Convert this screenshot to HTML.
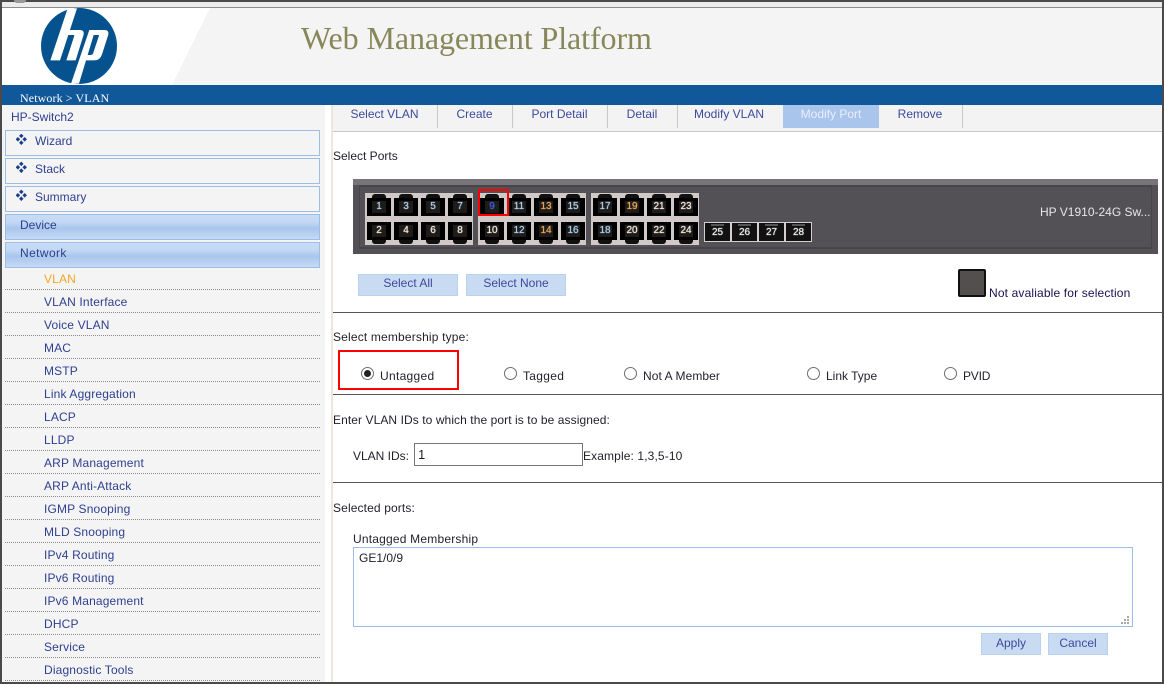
<!DOCTYPE html>
<html><head><meta charset="utf-8"><title>Web Management Platform</title>
<style>
html,body{margin:0;padding:0;background:#fff}
#r{position:relative;width:1164px;height:684px;overflow:hidden;background:#fff;font:12px/14px "Liberation Sans",sans-serif;color:#1f1f2a}
#r div,#r span.t{position:absolute}
.t{white-space:nowrap}
.m{left:44px;color:#2e3f8f;letter-spacing:.15px;white-space:nowrap;margin-top:-1px}
.d{left:5px;width:315px;height:0;border-top:1px dotted #8a8a8a}
.b{left:5px;width:313px;height:24px;border:1px solid #9bbde6;background:#f4f4f4}
.bt{color:#2e3f8f;white-space:nowrap;margin-top:-1px}
.g{left:5px;width:313px;height:24px;border:1px solid #9bbde6;background:linear-gradient(#c8dcf6,#c3d8f4 30%,#a9c6ec 55%,#c6daf5)}
.tb{top:107px;color:#3b4a9c;white-space:nowrap;transform:translateX(-50%)}
.sp{top:105px;width:1px;height:23px;background:#c8c8c8}
.hr{left:333px;width:829px;height:1px;background:#555}
.btn{background:#c9daf3;border:1px solid #b9d0ef;box-sizing:border-box;color:#3b4a9c;text-align:center;height:22px;line-height:18px}
.p{width:24px;height:18px;background:#000 linear-gradient(#1e1b19,#1e1b19) center/14px 12px no-repeat;color:#a9d0f2;font:10px/18px "Liberation Sans",sans-serif;text-align:center;text-shadow:0 0 1px currentColor}
.p:before{content:"";position:absolute;left:5px;top:-4px;width:14px;height:4px;background:#111;border-radius:3px 3px 0 0}
.q:before{top:18px;border-radius:0 0 3px 3px}
.x{width:25px;height:18px;background:#111;border:1px solid #d3cfcf;color:#f0f0f0;font:10px/19px "Liberation Sans",sans-serif;text-align:center;text-shadow:0 0 1px currentColor}
.x:before{content:"";position:absolute;left:6px;top:1px;width:13px;height:2px;background:#555}
.w{color:#f3ece0}.o{color:#eba65a}
.grp{background:#d0c9c7;top:193px;height:52px;width:108px}
.rad{top:367px;width:11px;height:11px;border:1px solid #6e6e6e;border-radius:50%;background:#fff}
</style></head><body><div id="r">
<div style="left:0;top:0;width:1164px;height:2px;background:#4a4a4a"></div>
<div style="left:0;top:2px;width:1164px;height:5px;background:#ececec"></div>
<div style="left:14px;top:0;width:12px;height:3px;background:#999;border-radius:0 0 6px 6px"></div>
<div style="left:0;top:7px;width:1164px;height:1px;background:#8c8c8c"></div>
<svg style="position:absolute;left:0;top:8px" width="1164" height="77"><rect width="1164" height="77" fill="#fff"/><polygon points="210,0 1164,0 1164,77 172,77" fill="#f4f4f4"/></svg>
<svg style="position:absolute;left:35px;top:5px" width="90" height="84" viewBox="0 0 270 252">
<circle cx="132" cy="123" r="114" fill="#05528f"/>
<path fill="#fff" d="M98 10 L126 10 L75 166 L46 166 Z"/>
<path fill="#fff" d="M92 75 H134 Q150 75 145 92 L122 166 H94 L118 92 Q119 90 114 90 H86 Z"/>
<path fill="#fff" d="M163 75 H208 Q224 75 219 92 L201 148 Q195 166 178 166 H145 L151 150 H168 Q172 150 174 146 L192 92 Q193 90 189 90 H176 L132 236 H108 Z"/>
</svg>
<div class="t" style="left:301px;top:20px;font:32px/36px 'Liberation Serif',serif;color:#87875a;white-space:nowrap;letter-spacing:-.09px">Web Management Platform</div>
<div style="left:0;top:85px;width:1164px;height:20px;background:#11589a"></div>
<div class="t" style="left:20px;top:91px;font:12px/14px 'Liberation Serif',serif;color:#fff;white-space:nowrap;letter-spacing:.1px">Network &gt; VLAN</div>

<div style="left:2px;top:105px;width:323px;height:579px;background:#f4f4f4"></div>
<div style="left:331px;top:105px;width:2px;height:579px;background:#ebe8d9"></div>
<div style="left:333px;top:105px;width:829px;height:26px;background:#f3f3f3"></div>
<div style="left:333px;top:131px;width:829px;height:1px;background:#c8c8c8"></div>
<div class="bt" style="left:11px;top:110px;margin-top:0">HP-Switch2</div>

<div class="b" style="top:130px"></div><div class="b" style="top:158px"></div><div class="b" style="top:186px"></div>
<svg style="position:absolute;left:16px;top:134px" width="11" height="68" fill="#1c3f8c">
<g><rect x="3.7" y=".3" width="3.2" height="3.2" transform="rotate(45 5.3 1.9)"/><rect x=".3" y="3.7" width="3.2" height="3.2" transform="rotate(45 1.9 5.3)"/><rect x="7.1" y="3.7" width="3.2" height="3.2" transform="rotate(45 8.7 5.3)"/><rect x="3.7" y="7.1" width="3.2" height="3.2" transform="rotate(45 5.3 8.7)"/></g>
<g transform="translate(0,28)"><rect x="3.7" y=".3" width="3.2" height="3.2" transform="rotate(45 5.3 1.9)"/><rect x=".3" y="3.7" width="3.2" height="3.2" transform="rotate(45 1.9 5.3)"/><rect x="7.1" y="3.7" width="3.2" height="3.2" transform="rotate(45 8.7 5.3)"/><rect x="3.7" y="7.1" width="3.2" height="3.2" transform="rotate(45 5.3 8.7)"/></g>
<g transform="translate(0,56)"><rect x="3.7" y=".3" width="3.2" height="3.2" transform="rotate(45 5.3 1.9)"/><rect x=".3" y="3.7" width="3.2" height="3.2" transform="rotate(45 1.9 5.3)"/><rect x="7.1" y="3.7" width="3.2" height="3.2" transform="rotate(45 8.7 5.3)"/><rect x="3.7" y="7.1" width="3.2" height="3.2" transform="rotate(45 5.3 8.7)"/></g>
</svg>
<div class="bt" style="left:35px;top:135px">Wizard</div>
<div class="bt" style="left:35px;top:163px">Stack</div>
<div class="bt" style="left:35px;top:191px">Summary</div>
<div class="g" style="top:214px"></div><div class="g" style="top:242px"></div>
<div class="bt" style="left:20px;top:219px">Device</div>
<div class="bt" style="left:20px;top:247px;letter-spacing:.4px">Network</div>

<div class="m" style="top:273px;color:#f5a623">VLAN</div><div class="d" style="top:289px"></div>
<div class="m" style="top:296px">VLAN Interface</div><div class="d" style="top:312px"></div>
<div class="m" style="top:319px">Voice VLAN</div><div class="d" style="top:335px"></div>
<div class="m" style="top:342px">MAC</div><div class="d" style="top:358px"></div>
<div class="m" style="top:365px">MSTP</div><div class="d" style="top:381px"></div>
<div class="m" style="top:388px">Link Aggregation</div><div class="d" style="top:404px"></div>
<div class="m" style="top:411px">LACP</div><div class="d" style="top:427px"></div>
<div class="m" style="top:434px">LLDP</div><div class="d" style="top:450px"></div>
<div class="m" style="top:457px">ARP Management</div><div class="d" style="top:473px"></div>
<div class="m" style="top:480px">ARP Anti-Attack</div><div class="d" style="top:496px"></div>
<div class="m" style="top:503px">IGMP Snooping</div><div class="d" style="top:519px"></div>
<div class="m" style="top:526px">MLD Snooping</div><div class="d" style="top:542px"></div>
<div class="m" style="top:549px">IPv4 Routing</div><div class="d" style="top:565px"></div>
<div class="m" style="top:572px">IPv6 Routing</div><div class="d" style="top:588px"></div>
<div class="m" style="top:595px">IPv6 Management</div><div class="d" style="top:611px"></div>
<div class="m" style="top:618px">DHCP</div><div class="d" style="top:634px"></div>
<div class="m" style="top:641px">Service</div><div class="d" style="top:657px"></div>
<div class="m" style="top:664px">Diagnostic Tools</div><div class="d" style="top:680px"></div>

<div style="left:783px;top:105px;width:96px;height:23px;background:#a9c5ec"></div>
<div class="tb" style="left:384.5px">Select VLAN</div><div class="sp" style="left:437px"></div>
<div class="tb" style="left:474.5px">Create</div><div class="sp" style="left:512px"></div>
<div class="tb" style="left:559.5px">Port Detail</div><div class="sp" style="left:607px"></div>
<div class="tb" style="left:642px">Detail</div><div class="sp" style="left:677px"></div>
<div class="tb" style="left:729px">Modify VLAN</div>
<div class="tb" style="left:831px;color:#e8eefa">Modify Port</div>
<div class="tb" style="left:920px">Remove</div><div class="sp" style="left:962px"></div>

<div class="t" style="left:333px;top:149px">Select Ports</div>

<div style="left:353px;top:179px;width:805px;height:75px;background:#545156"></div>
<div style="left:353px;top:179px;width:805px;height:6px;background:#77757a"></div>
<div style="left:359px;top:185px;width:793px;height:64px;border:1px solid #47454a;border-width:2px 1px 2px 1px;box-sizing:border-box"></div>
<div class="grp" style="left:365px"></div><div class="grp" style="left:478px"></div><div class="grp" style="left:591px"></div>

<div class="p" style="left:367px;top:198px">1</div><div class="p" style="left:394px;top:198px">3</div><div class="p" style="left:421px;top:198px">5</div><div class="p" style="left:448px;top:198px">7</div>
<div class="p" style="left:480px;top:198px;color:#3f5ce8">9</div><div class="p" style="left:507px;top:198px">11</div><div class="p o" style="left:534px;top:198px">13</div><div class="p" style="left:561px;top:198px">15</div>
<div class="p" style="left:593px;top:198px">17</div><div class="p o" style="left:620px;top:198px">19</div><div class="p w" style="left:647px;top:198px">21</div><div class="p w" style="left:674px;top:198px">23</div>
<div class="p q w" style="left:367px;top:222px">2</div><div class="p q w" style="left:394px;top:222px">4</div><div class="p q w" style="left:421px;top:222px">6</div><div class="p q w" style="left:448px;top:222px">8</div>
<div class="p q w" style="left:480px;top:222px">10</div><div class="p q" style="left:507px;top:222px">12</div><div class="p q o" style="left:534px;top:222px">14</div><div class="p q" style="left:561px;top:222px">16</div>
<div class="p q" style="left:593px;top:222px">18</div><div class="p q w" style="left:620px;top:222px">20</div><div class="p q w" style="left:647px;top:222px">22</div><div class="p q w" style="left:674px;top:222px">24</div>
<div class="x" style="left:704px;top:222px">25</div><div class="x" style="left:731px;top:222px">26</div><div class="x" style="left:758px;top:222px">27</div><div class="x" style="left:785px;top:222px">28</div>

<div style="left:478px;top:189px;width:27px;height:23px;border:2px solid #f00"></div>
<div class="t" style="left:1040px;top:205px;color:#e6e6ea">HP V1910-24G Sw...</div>

<div class="btn" style="left:358px;top:274px;width:100px;line-height:16px">Select All</div>
<div class="btn" style="left:466px;top:274px;width:100px;line-height:16px">Select None</div>
<div style="left:958px;top:269px;width:24px;height:24px;background:#544f4f;border:2px solid #111;border-radius:2px"></div>
<div class="t" style="left:989px;top:286px;color:#1d1050;letter-spacing:.15px">Not avaliable for selection</div>
<div class="hr" style="top:312px"></div>

<div class="t" style="left:333px;top:330px;letter-spacing:.17px">Select membership type:</div>
<div style="left:338px;top:350px;width:117px;height:36px;border:2px solid #f00"></div>
<div class="rad" style="left:361px"></div><div style="left:364px;top:370px;width:7px;height:7px;border-radius:50%;background:#222"></div>
<div class="t" style="left:380px;top:369px;letter-spacing:.3px">Untagged</div>
<div class="rad" style="left:504px"></div><div class="t" style="left:523px;top:369px;letter-spacing:.3px">Tagged</div>
<div class="rad" style="left:624px"></div><div class="t" style="left:643px;top:369px;letter-spacing:.08px">Not A Member</div>
<div class="rad" style="left:807px"></div><div class="t" style="left:826px;top:369px">Link Type</div>
<div class="rad" style="left:944px"></div><div class="t" style="left:963px;top:369px;letter-spacing:-.2px">PVID</div>
<div class="hr" style="top:394px"></div>

<div class="t" style="left:333px;top:413px;letter-spacing:.08px">Enter VLAN IDs to which the port is to be assigned:</div>
<div class="t" style="left:353px;top:449px">VLAN IDs:</div>
<div style="left:414px;top:443px;width:167px;height:21px;border:1px solid #777"></div>
<div class="t" style="left:418px;top:448px;font-size:13px">1</div>
<div class="t" style="left:583px;top:449px;letter-spacing:.12px">Example: 1,3,5-10</div>
<div class="hr" style="top:482px"></div>

<div class="t" style="left:333px;top:501px;letter-spacing:.13px">Selected ports:</div>
<div class="t" style="left:353px;top:532px;letter-spacing:.2px">Untagged Membership</div>
<div style="left:353px;top:547px;width:778px;height:78px;border:1px solid #9dbde8"></div>
<div class="t" style="left:359px;top:551px">GE1/0/9</div>
<svg style="position:absolute;left:1121px;top:616px" width="9" height="9" fill="#a8a8a8"><rect x="6" y="0" width="2" height="2"/><rect x="3" y="3" width="2" height="2"/><rect x="6" y="3" width="2" height="2"/><rect x="0" y="6" width="2" height="2"/><rect x="3" y="6" width="2" height="2"/><rect x="6" y="6" width="2" height="2"/></svg>
<div class="btn" style="left:981px;top:633px;width:60px">Apply</div>
<div class="btn" style="left:1048px;top:633px;width:60px">Cancel</div>

<div style="left:0;top:0;width:2px;height:684px;background:#4a4a4a"></div>
<div style="left:1162px;top:0;width:2px;height:684px;background:#4a4a4a"></div>
<div style="left:0;top:682px;width:1164px;height:2px;background:#4a4a4a"></div>
</div></body></html>
